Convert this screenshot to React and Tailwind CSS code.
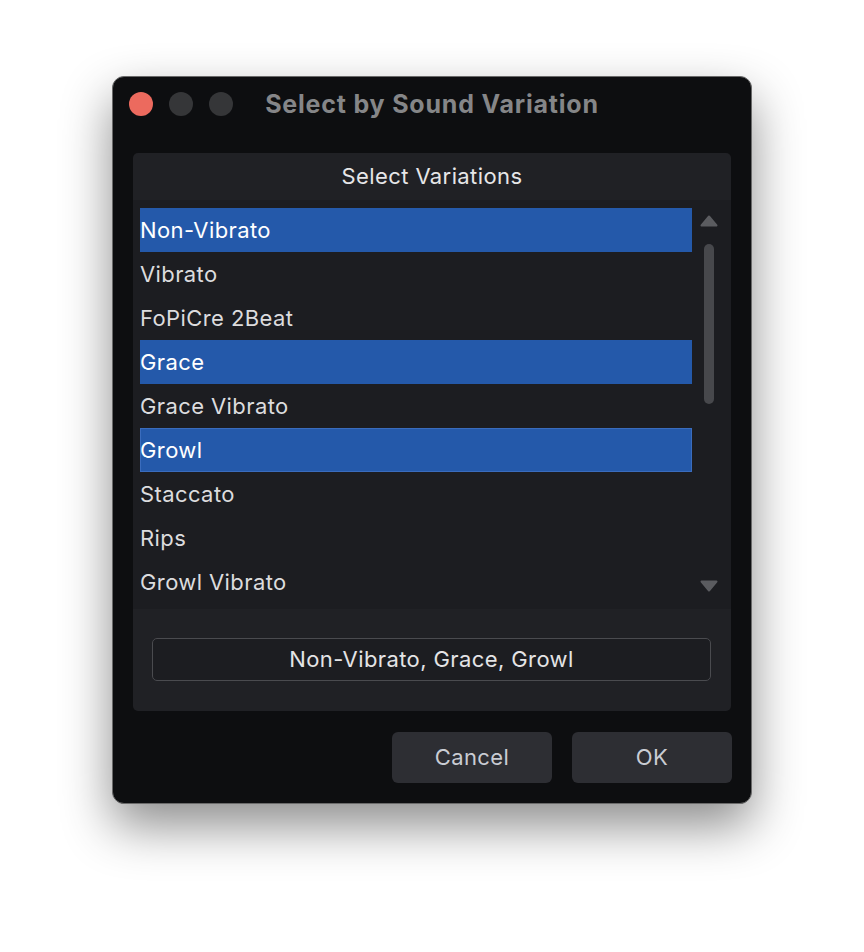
import React, { useState } from "react";

const variations = [
  "Non-Vibrato",
  "Vibrato",
  "FoPiCre 2Beat",
  "Grace",
  "Grace Vibrato",
  "Growl",
  "Staccato",
  "Rips",
  "Growl Vibrato",
];

const App = () => {
  const [selected] = useState(["Non-Vibrato", "Grace", "Growl"]);
  const focused = "Growl";

  return (
    <div
      className="min-h-screen bg-white flex justify-center pt-[76px]"
      style={{ fontFamily: "Inter, 'Liberation Sans', sans-serif" }}
    >
      {/* Dialog window */}
      <div className="w-[640px] h-[728px] rounded-[12px] bg-[#0d0e10] border border-[#6a6a6a] shadow-[0_22px_50px_rgba(0,0,0,0.45)] flex flex-col">
        {/* Title bar */}
        <div className="relative h-[55px] flex items-center justify-center">
          <div className="absolute left-[16px] top-[15px] flex gap-[16px]">
            <span className="w-[24px] h-[24px] rounded-full bg-[#ec6a5e]" />
            <span className="w-[24px] h-[24px] rounded-full bg-[#353638]" />
            <span className="w-[24px] h-[24px] rounded-full bg-[#353638]" />
          </div>
          <span className="text-[25px] font-bold text-[#858688] tracking-[0.8px]">
            Select by Sound Variation
          </span>
        </div>

        {/* Panel */}
        <div className="mx-[20px] mt-[21px] rounded-[5px] bg-[#202125] flex flex-col overflow-hidden">
          <div className="h-[47px] flex items-center justify-center text-[22px] tracking-[0.4px] text-[#e6e6e8]">
            Select Variations
          </div>

          {/* List */}
          <div className="h-[409px] bg-[#1c1d21] flex">
            <div className="flex-1 pl-[7px] pt-[8px]">
              {variations.map((v) => {
                const isSel = selected.includes(v);
                return (
                  <div
                    key={v}
                    className={
                      "h-[44px] flex items-center text-[22px] tracking-[0.4px] " +
                      (isSel
                        ? "bg-[#2459aa] text-white " +
                          (v === focused ? "shadow-[inset_0_0_0_1px_#3a6cbd]" : "")
                        : "text-[#dcdcde]")
                    }
                  >
                    {v}
                  </div>
                );
              })}
            </div>
            {/* Scrollbar */}
            <div className="w-[39px] pr-[5px] flex flex-col items-center pt-[15px]">
              <svg width="18" height="12" viewBox="0 0 18 12">
                <path d="M9 1.5 L16.5 10.5 H1.5 Z" fill="#5b5c60" stroke="#5b5c60" strokeWidth="2" strokeLinejoin="round" />
              </svg>
              <div className="mt-[17px] w-[10px] h-[160px] rounded-full bg-[#47484c]" />
              <div className="flex-1" />
              <svg width="18" height="12" viewBox="0 0 18 12" className="mb-[17px]">
                <path d="M9 10.5 L16.5 1.5 H1.5 Z" fill="#5b5c60" stroke="#5b5c60" strokeWidth="2" strokeLinejoin="round" />
              </svg>
            </div>
          </div>

          {/* Summary field */}
          <div className="pt-[29px] pb-[30px] pl-[19px] pr-[20px]">
            <div className="h-[43px] rounded-[5px] border border-[#4a4b4f] bg-[#1c1d21] flex items-center justify-center text-[22px] tracking-[0.4px] text-[#e4e4e6]">
              {selected.join(", ")}
            </div>
          </div>
        </div>

        {/* Buttons */}
        <div className="mt-[21px] pr-[19px] flex justify-end gap-[20px]">
          <button className="w-[160px] h-[51px] rounded-[6px] bg-[#2d2e33] text-[22px] tracking-[0.4px] text-[#c9ccd3]">
            Cancel
          </button>
          <button className="w-[160px] h-[51px] rounded-[6px] bg-[#2d2e33] text-[22px] tracking-[0.4px] text-[#c9ccd3]">
            OK
          </button>
        </div>
      </div>
    </div>
  );
};

export default App;
